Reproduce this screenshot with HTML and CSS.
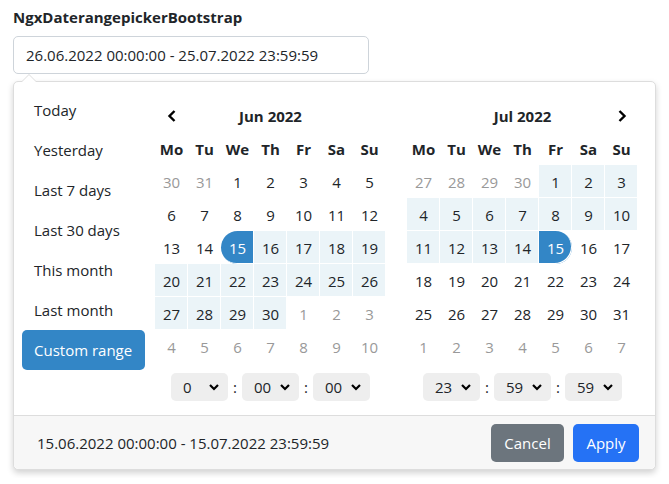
FILE: index.html
```html
<!DOCTYPE html>
<html>
<head>
<meta charset="utf-8">
<link rel="stylesheet" href="styles.css">
</head>
<body>
<div class="page">
  <div class="label">NgxDaterangepickerBootstrap</div>
  <div class="input">26.06.2022 00:00:00 - 25.07.2022 23:59:59</div>
  <div class="popup">
    <div class="main">
      <ul class="ranges">
        <li>Today</li>
        <li>Yesterday</li>
        <li>Last 7 days</li>
        <li>Last 30 days</li>
        <li>This month</li>
        <li>Last month</li>
        <li class="active">Custom range</li>
      </ul>
      <div class="cal">
        <div class="head">
          <span class="nav"><svg width="12" height="14" viewBox="0 0 12 14"><path d="M8.5 2 L3.5 7 L8.5 12" fill="none" stroke="#000" stroke-width="2.4"/></svg></span>
          <span class="month">Jun 2022</span>
          <span class="nav"></span>
        </div>
        <div class="grid">
          <div class="dn">Mo</div><div class="dn">Tu</div><div class="dn">We</div><div class="dn">Th</div><div class="dn">Fr</div><div class="dn">Sa</div><div class="dn">Su</div>
          <div class="d off">30</div><div class="d off">31</div><div class="d">1</div><div class="d">2</div><div class="d">3</div><div class="d">4</div><div class="d">5</div>
          <div class="d">6</div><div class="d">7</div><div class="d">8</div><div class="d">9</div><div class="d">10</div><div class="d">11</div><div class="d">12</div>
          <div class="d">13</div><div class="d">14</div><div class="d start">15</div><div class="d in">16</div><div class="d in">17</div><div class="d in">18</div><div class="d in">19</div>
          <div class="d in">20</div><div class="d in">21</div><div class="d in">22</div><div class="d in">23</div><div class="d in">24</div><div class="d in">25</div><div class="d in">26</div>
          <div class="d in">27</div><div class="d in">28</div><div class="d in">29</div><div class="d in">30</div><div class="d off">1</div><div class="d off">2</div><div class="d off">3</div>
          <div class="d off">4</div><div class="d off">5</div><div class="d off">6</div><div class="d off">7</div><div class="d off">8</div><div class="d off">9</div><div class="d off">10</div>
        </div>
        <div class="time">
          <div class="sel"><span>0</span><svg width="12" height="8" viewBox="0 0 12 8"><path d="M2 2 L6 6 L10 2" fill="none" stroke="#000" stroke-width="2.2"/></svg></div>
          <span class="colon">:</span>
          <div class="sel"><span>00</span><svg width="12" height="8" viewBox="0 0 12 8"><path d="M2 2 L6 6 L10 2" fill="none" stroke="#000" stroke-width="2.2"/></svg></div>
          <span class="colon">:</span>
          <div class="sel"><span>00</span><svg width="12" height="8" viewBox="0 0 12 8"><path d="M2 2 L6 6 L10 2" fill="none" stroke="#000" stroke-width="2.2"/></svg></div>
        </div>
      </div>
      <div class="cal">
        <div class="head">
          <span class="nav"></span>
          <span class="month">Jul 2022</span>
          <span class="nav"><svg width="12" height="14" viewBox="0 0 12 14"><path d="M3.5 2 L8.5 7 L3.5 12" fill="none" stroke="#000" stroke-width="2.4"/></svg></span>
        </div>
        <div class="grid">
          <div class="dn">Mo</div><div class="dn">Tu</div><div class="dn">We</div><div class="dn">Th</div><div class="dn">Fr</div><div class="dn">Sa</div><div class="dn">Su</div>
          <div class="d off">27</div><div class="d off">28</div><div class="d off">29</div><div class="d off">30</div><div class="d in">1</div><div class="d in">2</div><div class="d in">3</div>
          <div class="d in">4</div><div class="d in">5</div><div class="d in">6</div><div class="d in">7</div><div class="d in">8</div><div class="d in">9</div><div class="d in">10</div>
          <div class="d in">11</div><div class="d in">12</div><div class="d in">13</div><div class="d in">14</div><div class="d end">15</div><div class="d">16</div><div class="d">17</div>
          <div class="d">18</div><div class="d">19</div><div class="d">20</div><div class="d">21</div><div class="d">22</div><div class="d">23</div><div class="d">24</div>
          <div class="d">25</div><div class="d">26</div><div class="d">27</div><div class="d">28</div><div class="d">29</div><div class="d">30</div><div class="d">31</div>
          <div class="d off">1</div><div class="d off">2</div><div class="d off">3</div><div class="d off">4</div><div class="d off">5</div><div class="d off">6</div><div class="d off">7</div>
        </div>
        <div class="time">
          <div class="sel"><span>23</span><svg width="12" height="8" viewBox="0 0 12 8"><path d="M2 2 L6 6 L10 2" fill="none" stroke="#000" stroke-width="2.2"/></svg></div>
          <span class="colon">:</span>
          <div class="sel"><span>59</span><svg width="12" height="8" viewBox="0 0 12 8"><path d="M2 2 L6 6 L10 2" fill="none" stroke="#000" stroke-width="2.2"/></svg></div>
          <span class="colon">:</span>
          <div class="sel"><span>59</span><svg width="12" height="8" viewBox="0 0 12 8"><path d="M2 2 L6 6 L10 2" fill="none" stroke="#000" stroke-width="2.2"/></svg></div>
        </div>
      </div>
    </div>
    <div class="footer">
      <span class="selected">15.06.2022 00:00:00 - 15.07.2022 23:59:59</span>
      <div class="buttons">
        <button class="btn cancel">Cancel</button>
        <button class="btn apply">Apply</button>
      </div>
    </div>
  </div>
</div>
</body>
</html>
```
FILE: styles.css
```css
* { box-sizing: border-box; }
body {
  margin: 0;
  font-family: "Open Sans", "Noto Sans", sans-serif;
  font-size: 15px;
  color: #212529;
  background: #fff;
}
.page { padding: 8px 13px; }
.label {
  font-weight: 700;
  font-size: 15px;
  line-height: 19px;
  margin-bottom: 9px;
}
.input {
  width: 356px;
  height: 38px;
  border: 1px solid #ced4da;
  border-radius: 5px;
  padding: 0 12px;
  line-height: 36px;
  font-size: 15px;
}
.popup {
  position: relative;
  margin-top: 7px;
  width: 643px;
  border: 1px solid #ddd;
  border-radius: 5px;
  box-shadow: 0 3px 6px rgba(0,0,0,0.18);
  background: #fff;
}
.popup::before {
  content: "";
  position: absolute;
  top: -8px;
  left: 7px;
  border-left: 8px solid transparent;
  border-right: 8px solid transparent;
  border-bottom: 8px solid #ddd;
}
.popup::after {
  content: "";
  position: absolute;
  top: -7px;
  left: 8px;
  border-left: 7px solid transparent;
  border-right: 7px solid transparent;
  border-bottom: 7px solid #fff;
}
.main {
  display: flex;
  align-items: flex-start;
  padding: 8px 17px 0 8px;
}
.ranges {
  list-style: none;
  margin: 0 10px 0 0;
  padding: 0;
  width: 123px;
}
.ranges li {
  height: 40px;
  line-height: 24px;
  padding: 8px 12px;
  border-radius: 5px;
}
.ranges li.active {
  background: #3386c6;
  color: #fff;
}
.cal {
  width: 231px;
  margin-top: 9px;
  padding-bottom: 14px;
}
.cal + .cal { margin-left: 21px; }
.head {
  display: grid;
  grid-template-columns: 33px 1fr 33px;
  height: 33px;
  align-items: center;
  text-align: center;
  font-weight: 700;
}
.nav { display: flex; justify-content: center; align-items: center; }
.grid {
  display: grid;
  grid-template-columns: repeat(7, 33px);
  grid-auto-rows: 33px;
}
.dn, .d {
  display: flex;
  align-items: center;
  justify-content: center;
}
.dn { font-weight: 700; }
.d.off { color: #999; }
.d.in {
  background: #ebf4f8;
  box-shadow: inset -1px -1px 0 #fff;
}
.d.start, .d.end {
  background: #3386c6;
  color: #fff;
  box-shadow: inset -1px -1px 0 #fff;
}
.d.start { border-radius: 17px 0 0 17px; }
.d.end { border-radius: 0 17px 17px 0; }
.time {
  display: flex;
  justify-content: center;
  align-items: center;
  margin-top: 10px;
  gap: 5px;
}
.sel {
  width: 57px;
  height: 28px;
  background: #eee;
  border-radius: 5px;
  display: flex;
  align-items: center;
  justify-content: space-between;
  padding: 0 8px 0 12px;
}
.colon { width: 4px; text-align: center; }
.footer {
  border-top: 1px solid #ddd;
  background: #f7f7f7;
  border-radius: 0 0 5px 5px;
  display: flex;
  justify-content: space-between;
  align-items: center;
  padding: 8px 16px 7px 23px;
}
.selected { font-size: 15px; }
.buttons { display: flex; gap: 9px; }
.btn {
  font-family: inherit;
  font-size: 15px;
  height: 38px;
  border: none;
  border-radius: 5px;
  color: #fff;
  padding: 0 12px;
}
.cancel { background: #6c757d; width: 73px; }
.apply { background: #2572f5; width: 66px; }
```
